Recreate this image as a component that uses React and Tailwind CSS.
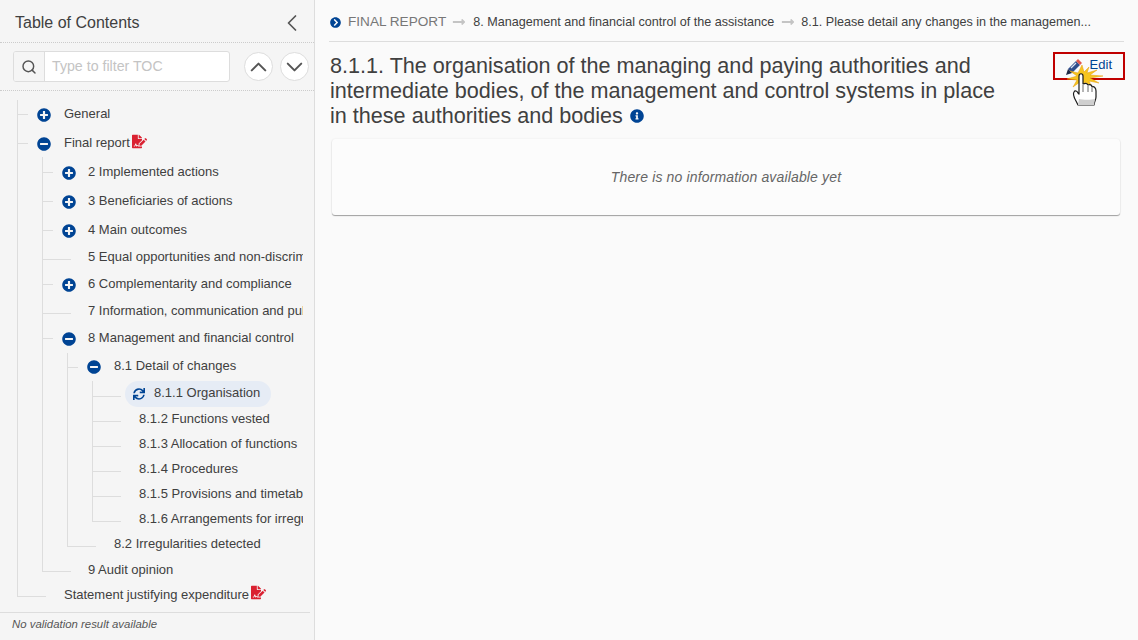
import { ChevronLeft, ChevronUp, ChevronDown, Search } from 'lucide-react';
import { FaPlusCircle, FaMinusCircle, FaChevronCircleRight, FaInfoCircle, FaSync, FaLongArrowAltRight, FaFileSignature } from 'react-icons/fa';

const FONT = 'font-["Liberation_Sans",Arial,sans-serif]';

// one row of the tree: stub line, optional toggle icon, label
function Row({ label, icon, signed, tight, up, flat, h = 'h-[25px]' }) {
  const Icon = icon === 'plus' ? FaPlusCircle : FaMinusCircle;
  const dy = up ? '-mt-[3px]' : flat ? 'mt-0' : '-mt-[1px]';
  return (
    <div className={`flex items-center whitespace-nowrap ${h}`}>
      {icon ? (
        <>
          <div className="w-[10px] h-px bg-[#ddd] shrink-0" />
          <Icon className="ml-[9px] text-[#004494] shrink-0" size={14} />
          <span className={`${tight ? 'ml-[12px]' : 'ml-[13px]'} ${dy} text-[13px] text-[#404040]`}>{label}</span>
        </>
      ) : (
        <>
          <div className="w-[28px] h-px bg-[#ddd] shrink-0 mt-[4px]" />
          <span className={`${tight ? 'ml-[17px]' : 'ml-[18px]'} ${dy} text-[13px] text-[#404040]`}>{label}</span>
        </>
      )}
      {signed && <FaFileSignature className="ml-[2px] -mt-[4px] text-[#da2131] shrink-0" size={15} />}
    </div>
  );
}

// nested list with its vertical guide line, the line stops at the last stub
function Branch({ children, top = 0, className = '' }) {
  return (
    <div className={`relative ${className}`}>
      <div className="absolute left-0 w-px bg-[#ddd]" style={{ top, bottom: 10 }} />
      <div className="pl-px">{children}</div>
    </div>
  );
}

function Toc() {
  return (
    <div className="flex-1 overflow-hidden pt-[9px] pl-[17px] w-[303px]">
      <Branch>
        <Row label="General" icon="plus" h="h-[29px]" />
        <Row label="Final report" icon="minus" h="h-[29px]" signed />
        <Branch className="ml-[24px]" top={-1}>
          <Row label="2 Implemented actions" icon="plus" h="h-[29px]" tight />
          <Row label="3 Beneficiaries of actions" icon="plus" h="h-[29px]" tight />
          <Row label="4 Main outcomes" icon="plus" h="h-[29px]" tight />
          <Row label="5 Equal opportunities and non-discrimination" tight />
          <Row label="6 Complementarity and compliance" icon="plus" h="h-[29px]" tight />
          <Row label="7 Information, communication and publicity" tight />
          <Row label="8 Management and financial control" icon="minus" h="h-[29px]" tight />
          <Branch className="ml-[24px]">
            <Row label="8.1 Detail of changes" icon="minus" h="h-[28px]" up />
            <Branch className="ml-[24px]">
              <div className="flex items-center h-[26px] whitespace-nowrap">
                <div className="w-[28px] h-px bg-[#ddd] shrink-0 mt-[4px]" />
                <div className="ml-[4px] pl-[8px] pr-[11px] h-[26px] flex items-center rounded-full bg-[#e6ecf5]">
                  <FaSync className="text-[#004494]" size={12} />
                  <span className="ml-[9px] -mt-[3px] text-[13px] text-[#404040]">8.1.1 Organisation</span>
                </div>
              </div>
              <Row label="8.1.2 Functions vested" />
              <Row label="8.1.3 Allocation of functions" />
              <Row label="8.1.4 Procedures" />
              <Row label="8.1.5 Provisions and timetable" />
              <Row label="8.1.6 Arrangements for irregularities" />
            </Branch>
            <Row label="8.2 Irregularities detected" />
          </Branch>
          <Row label="9 Audit opinion" tight flat />
        </Branch>
        <Row label="Statement justifying expenditure" signed flat />
      </Branch>
    </div>
  );
}

function EditButton() {
  return (
    <div className="relative shrink-0 w-[72px] h-[28px] border-2 border-[#c00000] flex items-center justify-end pr-[11px] mt-[10px] mr-[-1px]">
      <span className="text-[13px] -mt-[2px] text-[#004494]">Edit</span>
      <svg className="absolute left-[10px] top-[4px]" width="18" height="18" viewBox="0 0 18 18">
        <path d="M3 11 L11 3 L15 7 L7 15 Z" fill="#2f4d8c" />
        <path d="M11 3 L13 1 L17 5 L15 7 Z" fill="#e2574c" />
        <path d="M3 11 L1 17 L7 15 Z" fill="#1f2a44" />
        <path d="M6 10 L11 5" stroke="#dbe4f2" strokeWidth="1.2" />
      </svg>
      {/* click burst and hand cursor */}
      <svg className="absolute left-[12px] top-[8px]" width="40" height="46" viewBox="0 0 40 46">
        <path d="M15 3 L17 10 L22 5 L20 11 L30 8 L23 13 L36 14 L23 16 L32 21 L22 19 L25 25 L18 20 L16 26 L13 20 L6 25 L10 18 L0 17 L10 14 L3 9 L11 11 Z" fill="#f7c51e" stroke="#e39c10" strokeWidth="0.5" />
        <path d="M10 41 C8 37 5 33 7 30 C8 28 10 29 11 31 L12 32 L12 14 C12 11 16 11 16 14 L16 22 C18 21 20 21 21 23 C23 22 25 23 25 25 C27 24 29 26 29 29 L29 35 C29 38 27 40 27 43 L11 43 Z" fill="#fff" stroke="#1c1c1c" strokeWidth="1.2" strokeLinejoin="round" />
        <path d="M16 23 L16 30 M21 24 L21 30 M25 26 L25 30" stroke="#444" strokeWidth="0.8" />
        <path d="M12 37 C16 38 24 38 28 37 L27 43 L11 43 Z" fill="#cfcfcf" />
      </svg>
    </div>
  );
}

export default function App() {
  return (
    <div className={`${FONT} flex h-[640px] w-[1138px] overflow-hidden bg-[#fafafa] text-[#404040]`}>
      {/* Sidebar */}
      <aside className="w-[315px] shrink-0 flex flex-col bg-[#f5f5f5] border-r border-r-[#ddd]">
        <div className="h-[43px] shrink-0 flex items-center justify-between pt-[4px] pl-[15px] pr-[8px] border-b border-dotted border-b-[#ccc]">
          <span className="text-[16px] text-[#404040]">Table of Contents</span>
          <ChevronLeft className="text-[#555]" size={28} strokeWidth={1.5} />
        </div>
        <div className="h-[48px] shrink-0 flex items-center pl-[13px] pr-[5px] border-b border-dotted border-b-[#ccc]">
          <div className="flex w-[217px] h-[31px] rounded-[3px] border border-[#ddd] bg-white overflow-hidden">
            <div className="w-[31px] shrink-0 flex items-center justify-center bg-[#f5f5f5] border-r border-r-[#ddd]">
              <Search className="text-[#555]" size={16} strokeWidth={2.2} />
            </div>
            <span className="pl-[7px] leading-[29px] text-[14.2px] text-[#c4c4c4]">Type to filter TOC</span>
          </div>
          <div className="ml-[14px] w-[29px] h-[29px] rounded-full border border-[#ddd] bg-white flex items-center justify-center">
            <ChevronUp className="text-[#555]" size={28} strokeWidth={1.8} />
          </div>
          <div className="ml-[7px] w-[29px] h-[29px] rounded-full border border-[#ddd] bg-white flex items-center justify-center">
            <ChevronDown className="text-[#555]" size={28} strokeWidth={1.8} />
          </div>
        </div>
        <Toc />
        <div className="h-[28px] shrink-0 w-[310px] border-t border-t-[#ddd] pl-[12px] pt-[3px] text-[11.4px] italic text-[#555]">
          No validation result available
        </div>
      </aside>

      {/* Main */}
      <main className="flex-1 min-w-0 pl-[14px] pr-[14px]">
        <div className="h-[42px] pt-[3px] flex items-center border-b border-b-[#ddd] whitespace-nowrap">
          <FaChevronCircleRight className="text-[#004494] shrink-0 ml-px" size={11} />
          <span className="ml-[7px] text-[13.6px] text-[#777]">FINAL REPORT</span>
          <FaLongArrowAltRight className="ml-[6px] text-[#c4c4c4]" size={14} />
          <span className="ml-[7px] text-[12.6px] text-[#404040]">8. Management and financial control of the assistance</span>
          <FaLongArrowAltRight className="ml-[7px] text-[#c4c4c4]" size={14} />
          <span className="ml-[6px] text-[12.6px] text-[#404040]">8.1. Please detail any changes in the managemen...</span>
        </div>
        <div className="flex justify-between">
          <h1 className="pl-px pt-[11px] w-[680px] text-[21.6px] leading-[25px] font-normal text-[#404040]">
            8.1.1. The organisation of the managing and paying authorities and intermediate bodies, of the management and control systems in place in these authorities and bodies
            <FaInfoCircle className="inline ml-[7px] -mt-[3px] text-[#004494]" size={14} />
          </h1>
          <EditButton />
        </div>
        <div className="ml-[3px] mr-[4px] mt-[11px] h-[76px] flex items-center justify-center rounded-[3px] bg-[#fcfcfc] shadow-[0_1px_1px_rgba(0,0,0,0.35),0_0_2px_rgba(0,0,0,0.08)]">
          <span className="text-[14px] italic tracking-[0.15px] text-[#666]">There is no information available yet</span>
        </div>
      </main>
    </div>
  );
}
